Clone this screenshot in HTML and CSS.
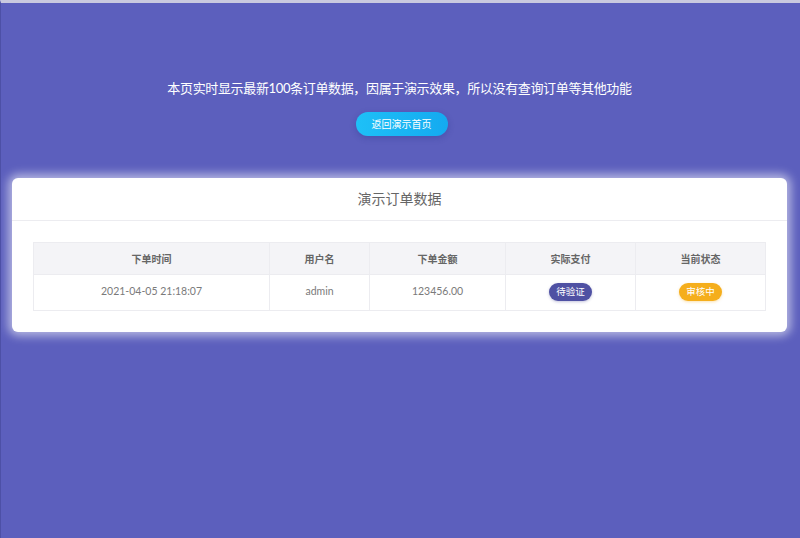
FILE: index.html
```html
<!DOCTYPE html>
<html lang="zh-CN">
<head>
<meta charset="utf-8">
<title>演示订单数据</title>
<link rel="stylesheet" href="styles.css">
</head>
<body>
<div class="page">
  <section class="hero">
    <p class="notice">本页实时显示最新100条订单数据，因属于演示效果，所以没有查询订单等其他功能</p>
    <a class="back-btn" href="#">返回演示首页</a>
  </section>
  <section class="card">
    <h2 class="card-title">演示订单数据</h2>
    <div class="card-body">
      <table class="orders">
        <colgroup>
          <col class="c1"><col class="c2"><col class="c3"><col class="c4"><col class="c5">
        </colgroup>
        <thead>
          <tr><th>下单时间</th><th>用户名</th><th>下单金额</th><th>实际支付</th><th>当前状态</th></tr>
        </thead>
        <tbody>
          <tr>
            <td>2021-04-05 21:18:07</td>
            <td>admin</td>
            <td>123456.00</td>
            <td><span class="badge badge-indigo">待验证</span></td>
            <td><span class="badge badge-amber">审核中</span></td>
          </tr>
        </tbody>
      </table>
    </div>
  </section>
</div>
</body>
</html>
```

FILE: styles.css
```css
html, body {
  margin: 0;
  padding: 0;
  height: 100%;
}
body {
  background: #5c5fbd;
  font-family: "Lato", "Noto Sans CJK SC", sans-serif;
  border-top: 3px solid #c9c9df;
  border-left: 1px solid #4d50a6;
  box-sizing: border-box;
  overflow: hidden;
}
.page {
  padding: 0 13px 0 11px;
}
.hero {
  text-align: center;
  padding-top: 76px;
}
.notice {
  margin: 0;
  color: #ffffff;
  font-size: 13px;
  letter-spacing: -0.35px;
  line-height: 18px;
}
.back-btn {
  display: inline-block;
  margin-top: 15px;
  margin-left: 4px;
  width: 92px;
  height: 24px;
  line-height: 24px;
  border-radius: 12px;
  background: linear-gradient(90deg, #1ec0f7, #14aaf0);
  color: #ffffff;
  font-size: 10px;
  text-decoration: none;
  box-shadow: 0 2px 6px rgba(20, 40, 120, 0.25);
}
.card {
  margin-top: 42px;
  background: #ffffff;
  border-radius: 6px;
  box-shadow: 0 0 10px 4px rgba(255, 255, 255, 0.55);
}
.card-title {
  margin: 0;
  height: 42px;
  line-height: 42px;
  text-align: center;
  font-size: 14px;
  font-weight: normal;
  color: #666;
  border-bottom: 1px solid #ececf0;
}
.card-body {
  padding: 21px 21px 21px 21px;
}
.orders {
  width: 100%;
  border-collapse: collapse;
  table-layout: fixed;
  border: 1px solid #ececf0;
}
.orders .c1 { width: 236px; }
.orders .c2 { width: 100px; }
.orders .c3 { width: 136px; }
.orders .c4 { width: 130px; }
.orders th, .orders td {
  border: 1px solid #ececf0;
  text-align: center;
  padding: 0;
}
.orders th {
  height: 31px;
  background: #f4f4f7;
  font-size: 10px;
  font-weight: bold;
  color: #666;
}
.orders td {
  height: 32px;
  padding-bottom: 3px;
  font-size: 10.5px;
  color: #7a7a7a;
}
.badge {
  display: inline-block;
  width: 43px;
  height: 18px;
  line-height: 18px;
  border-radius: 9px;
  font-size: 9.5px;
  color: #ffffff;
  position: relative;
  top: 1px;
}
.badge-indigo {
  background: #4f51a3;
  box-shadow: 0 1px 3px rgba(60, 60, 140, 0.3);
}
.badge-amber {
  background: #f5ae1c;
  box-shadow: 0 1px 3px rgba(240, 170, 30, 0.35);
}
```
